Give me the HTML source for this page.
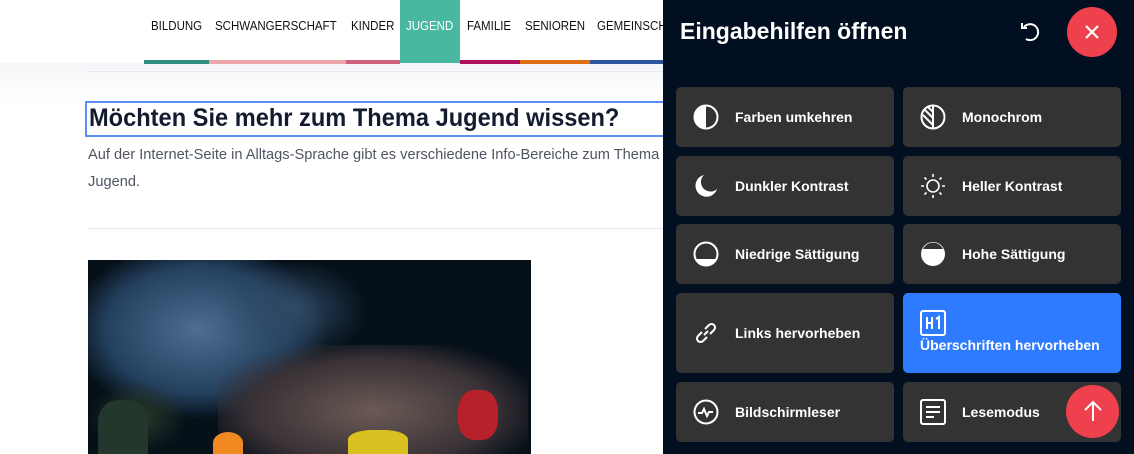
<!DOCTYPE html>
<html><head><meta charset="utf-8"><style>
*{margin:0;padding:0;box-sizing:border-box}
body{width:1134px;height:454px;overflow:hidden;background:#fff;font-family:"Liberation Sans",sans-serif;position:relative}
.hdr{position:absolute;left:0;top:0;width:1134px;height:63px;background:#fff}
.below{position:absolute;left:0;top:63px;width:663px;height:391px;background:linear-gradient(#f5f6f8,#fff 40px)}
.nav{position:absolute;top:0;height:63px;font-size:12.5px;color:#111;line-height:52px;white-space:nowrap;transform:scaleX(.92);transform-origin:left}
.strip{position:absolute;top:60px;height:4px}
.h2{position:absolute;left:85px;top:101px;width:590px;height:36px;border:2px solid #5a8ef2;font-weight:bold;font-size:25px;color:#131b2e;padding-left:2px;line-height:31px}
.h2 b{display:inline-block;transform:scaleX(.945);transform-origin:left}
.p{position:absolute;left:88px;font-size:15px;color:#4f5563;white-space:nowrap;transform:scaleX(.975);transform-origin:left}
.panel{position:absolute;left:663px;top:0;width:471px;height:454px;background:#020f20}
.btn{position:absolute;background:#333;border-radius:5px;color:#fff;font-weight:bold;font-size:14px;display:flex;align-items:center}
.btn svg{position:absolute;left:17px}
.btn span{position:absolute;left:59px}
</style></head><body>
<div class="hdr"></div>
<div class="below"></div>
<div class="strip" style="left:144px;width:65px;background:#2f8f7e"></div>
<div class="strip" style="left:209px;width:137px;background:#eba6ab"></div>
<div class="strip" style="left:346px;width:54px;background:#d0607f"></div>
<div class="strip" style="left:460px;width:60px;background:#b0105e"></div>
<div class="strip" style="left:520px;width:70px;background:#de6f12"></div>
<div class="strip" style="left:590px;width:73px;background:#2f55a0"></div>
<div style="position:absolute;left:400px;top:0;width:60px;height:63px;background:#48b8a0"></div>
<div class="nav" style="left:151px">BILDUNG</div>
<div class="nav" style="left:215px">SCHWANGERSCHAFT</div>
<div class="nav" style="left:351px">KINDER</div>
<div class="nav" style="left:406px;color:#fff">JUGEND</div>
<div class="nav" style="left:467px">FAMILIE</div>
<div class="nav" style="left:525px">SENIOREN</div>
<div class="nav" style="left:597px">GEMEINSCHAFT</div>
<div style="position:absolute;left:88px;top:71px;width:575px;height:1px;background:#e6e8ee"></div>
<div class="h2"><b>Möchten Sie mehr zum Thema Jugend wissen?</b></div>
<div class="p" style="top:146px">Auf der Internet-Seite in Alltags-Sprache gibt es verschiedene Info-Bereiche zum Thema</div>
<div class="p" style="top:173px">Jugend.</div>
<div style="position:absolute;left:88px;top:228px;width:575px;height:1px;background:#e6e8ee"></div>
<div style="position:absolute;left:88px;top:260px;width:443px;height:194px;background:#061019;overflow:hidden">
<div style="position:absolute;left:-20px;top:-20px;width:260px;height:180px;border-radius:50%;background:radial-gradient(#4d6e92,#23405e 50%,transparent 70%)"></div>
<div style="position:absolute;left:130px;top:0;width:150px;height:100px;border-radius:50%;background:radial-gradient(#2e4a66,transparent 70%)"></div>
<div style="position:absolute;left:130px;top:85px;width:310px;height:110px;background:radial-gradient(ellipse at 50% 60%,#6b5a55,#3a3236 55%,transparent 80%)"></div>
<div style="position:absolute;left:0;top:120px;width:100px;height:74px;background:radial-gradient(#2c3a2a,transparent 70%)"></div>
<div style="position:absolute;left:260px;top:170px;width:60px;height:24px;background:#d8c020;border-radius:40% 40% 0 0"></div>
<div style="position:absolute;left:370px;top:130px;width:40px;height:50px;background:#b8202a;border-radius:40%"></div>
<div style="position:absolute;left:125px;top:172px;width:30px;height:22px;background:#f08a20;border-radius:50% 50% 0 0"></div>
<div style="position:absolute;left:10px;top:140px;width:50px;height:54px;background:#23372c;border-radius:40% 40% 0 0"></div>
</div>
<div class="panel">
<div style="position:absolute;left:17px;top:18px;color:#fff;font-weight:bold;font-size:23px">Eingabehilfen öffnen</div>
<svg style="position:absolute;left:355px;top:20px" width="24" height="24" viewBox="0 0 24 24" fill="none" stroke="#fff" stroke-width="2"><path d="M6 7A8 8 0 1 1 8 19"/><path d="M4 3v5h5"/></svg>
<div style="position:absolute;left:404px;top:7px;width:50px;height:50px;border-radius:50%;background:#ef414d"></div>
<svg style="position:absolute;left:420px;top:23px" width="18" height="18" viewBox="0 0 18 18" stroke="#fff" stroke-width="2.2"><path d="M3 3L15 15M15 3L3 15"/></svg>

<div class="btn" style="left:13px;top:87px;width:218px;height:60px"><svg width="26" height="26" viewBox="0 0 26 26"><circle cx="13" cy="13" r="11.5" fill="none" stroke="#fff" stroke-width="2"/><path d="M13 1.5a11.5 11.5 0 0 0 0 23z" fill="#fff"/></svg><span>Farben umkehren</span></div>
<div class="btn" style="left:240px;top:87px;width:218px;height:60px"><svg width="26" height="26" viewBox="0 0 26 26" fill="none" stroke="#fff" stroke-width="2"><circle cx="13" cy="13" r="11.5"/><path d="M13 1.5v23M5 6l8 8M3 11l10 10M8 3l5 5"/></svg><span>Monochrom</span></div>
<div class="btn" style="left:13px;top:156px;width:218px;height:60px"><svg width="26" height="26" viewBox="0 0 26 26"><path d="M11 2a11 11 0 1 0 13 14A9 9 0 0 1 11 2z" fill="#fff"/></svg><span>Dunkler Kontrast</span></div>
<div class="btn" style="left:240px;top:156px;width:218px;height:60px"><svg width="26" height="26" viewBox="0 0 26 26" fill="none" stroke="#fff" stroke-width="1.6"><circle cx="13" cy="13" r="6"/><path d="M13 1v3M13 22v3M1 13h3M22 13h3M4.5 4.5l2 2M19.5 19.5l2 2M4.5 21.5l2-2M19.5 6.5l2-2"/></svg><span>Heller Kontrast</span></div>
<div class="btn" style="left:13px;top:224px;width:218px;height:60px"><svg width="26" height="26" viewBox="0 0 26 26"><circle cx="13" cy="13" r="11.5" fill="none" stroke="#fff" stroke-width="2"/><path d="M3 18h20a11 11 0 0 1-20 0z" fill="#fff"/></svg><span>Niedrige Sättigung</span></div>
<div class="btn" style="left:240px;top:224px;width:218px;height:60px"><svg width="26" height="26" viewBox="0 0 26 26"><circle cx="13" cy="13" r="12" fill="#fff"/><path d="M3 8h20a11 11 0 0 0-20 0z" fill="#333"/></svg><span>Hohe Sättigung</span></div>
<div class="btn" style="left:13px;top:293px;width:218px;height:80px"><svg width="26" height="26" viewBox="0 0 26 26" fill="none" stroke="#fff" stroke-width="2"><path d="M11 15l4-4M9 12l-4 4a3 3 0 0 0 5 5l4-4M17 14l4-4a3 3 0 0 0-5-5l-4 4"/></svg><span>Links hervorheben</span></div>
<div class="btn" style="left:240px;top:293px;width:218px;height:80px;background:#2f7bff"><svg style="top:17px" width="26" height="26" viewBox="0 0 26 26" fill="none" stroke="#fff" stroke-width="2"><rect x="1" y="1" width="24" height="24" rx="2"/><path d="M7 7v12M12 7v12M7 13h5M16 9l3-2v12"/></svg><span style="left:17px;top:44px">Überschriften hervorheben</span></div>
<div class="btn" style="left:13px;top:382px;width:218px;height:60px"><svg width="26" height="26" viewBox="0 0 26 26" fill="none" stroke="#fff" stroke-width="2"><circle cx="13" cy="13" r="11.5"/><path d="M5 14h4l2-4 3 7 2-4h4"/></svg><span>Bildschirmleser</span></div>
<div class="btn" style="left:240px;top:382px;width:218px;height:60px"><svg width="26" height="26" viewBox="0 0 26 26" fill="none" stroke="#fff" stroke-width="2"><rect x="1" y="1" width="24" height="24" rx="2"/><path d="M6 8h14M6 13h14M6 18h8"/></svg><span>Lesemodus</span></div>
<div style="position:absolute;left:403px;top:385px;width:53px;height:53px;border-radius:50%;background:#ef414d"></div>
<svg style="position:absolute;left:418px;top:399px" width="24" height="24" viewBox="0 0 24 24" fill="none" stroke="#fff" stroke-width="2"><path d="M12 22V3M4 11l8-8 8 8"/></svg>
</div>
</body></html>
